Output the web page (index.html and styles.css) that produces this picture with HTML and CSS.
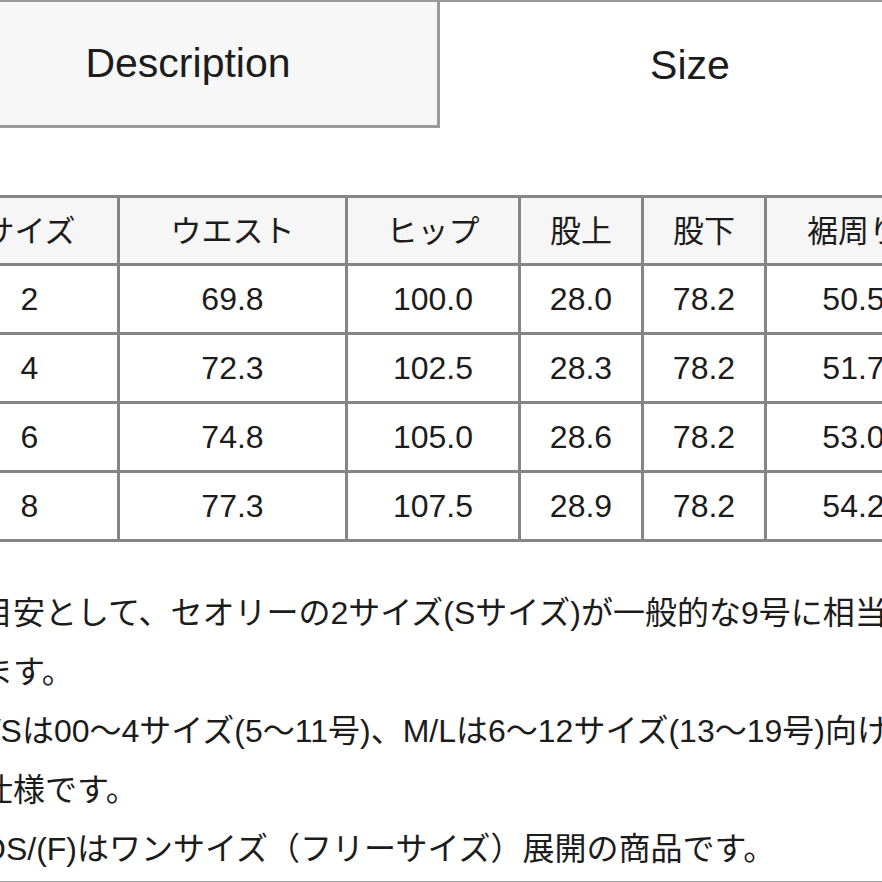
FILE: index.html
```html
<!DOCTYPE html>
<html lang="ja">
<head>
<meta charset="utf-8">
<title>Size</title>
<link rel="stylesheet" href="styles.css">
</head>
<body>
<div class="page">
  <div class="tabs">
    <div class="tab tab-inactive">Description</div>
    <div class="tab tab-active">Size</div>
  </div>
  <div class="content">
    <table class="size-table">
      <colgroup>
        <col class="c1"><col class="c2"><col class="c3"><col class="c4"><col class="c5"><col class="c6">
      </colgroup>
      <thead>
        <tr><th>サイズ</th><th>ウエスト</th><th>ヒップ</th><th>股上</th><th>股下</th><th>裾周り</th></tr>
      </thead>
      <tbody>
        <tr><td>2</td><td>69.8</td><td>100.0</td><td>28.0</td><td>78.2</td><td>50.5</td></tr>
        <tr><td>4</td><td>72.3</td><td>102.5</td><td>28.3</td><td>78.2</td><td>51.7</td></tr>
        <tr><td>6</td><td>74.8</td><td>105.0</td><td>28.6</td><td>78.2</td><td>53.0</td></tr>
        <tr><td>8</td><td>77.3</td><td>107.5</td><td>28.9</td><td>78.2</td><td>54.2</td></tr>
      </tbody>
    </table>
    <div class="notes">
      <p>※目安として、セオリーの2サイズ(Sサイズ)が一般的な9号に相当<br>します。</p>
      <p>XS/Sは00〜4サイズ(5〜11号)、M/Lは6〜12サイズ(13〜19号)向け<br>の仕様です。</p>
      <p>※OS/(F)はワンサイズ（フリーサイズ）展開の商品です。</p>
    </div>
  </div>
</div>
</body>
</html>
```
FILE: styles.css
```css
html, body {
  margin: 0;
  padding: 0;
  background: #ffffff;
  overflow: hidden;
}

body {
  font-family: "Liberation Sans", "Noto Sans CJK JP", sans-serif;
  color: #1c1c1c;
}

.page {
  width: 1001px;
  margin-left: -61px;
  border-top: 2px solid #9a9a9a;
  border-bottom: 2px solid #9a9a9a;
}

.tabs {
  display: grid;
  grid-template-columns: 501px 500px;
  height: 126px;
}

.tab {
  display: flex;
  align-items: center;
  justify-content: center;
  font-size: 41px;
  color: #1c1c1c;
}

.tab-inactive {
  background: #f7f7f7;
  border-right: 3px solid #9a9a9a;
  border-bottom: 3px solid #9a9a9a;
}

.tab-active {
  background: #ffffff;
}

.content {
  padding-top: 67px;
}

.size-table {
  border-collapse: collapse;
  table-layout: fixed;
  width: 1001px;
  font-size: 31px;
}

.c1 { width: 178px; }
.c2 { width: 228px; }
.c3 { width: 173px; }
.c4 { width: 123px; }
.c5 { width: 123px; }
.c6 { width: 176px; }

.size-table th,
.size-table td {
  border: 3px solid #858585;
  height: 66px;
  padding: 0;
  text-align: center;
  vertical-align: middle;
  font-weight: 400;
}

.size-table th {
  background: #f6f6f6;
  height: 61px;
  padding-bottom: 4px;
}

.size-table td {
  font-size: 32px;
}

.notes {
  padding: 42px 0 2px 10px;
  font-size: 32px;
  line-height: 59px;
  white-space: nowrap;
}

.notes p {
  margin: 0;
}
```
